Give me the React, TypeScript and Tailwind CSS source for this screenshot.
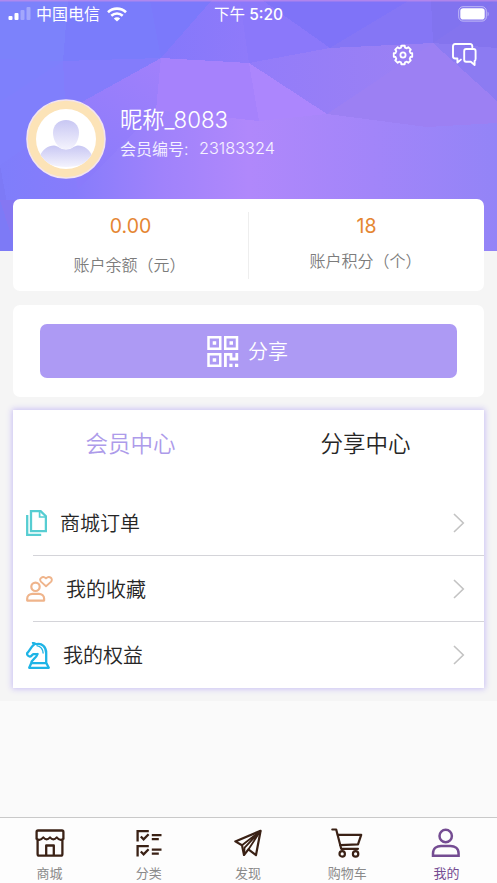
import type { ReactNode } from "react"

const FONT = "font-['Inter','Noto_Sans_CJK_SC',sans-serif]"

function PolyBackground() {
    return (
        <svg className="absolute inset-x-0 top-0 w-full h-[251px]" viewBox="0 0 497 251" preserveAspectRatio="none">
            <defs>
                <linearGradient id="base" x1="0" y1="0" x2="497" y2="0" gradientUnits="userSpaceOnUse">
                    <stop offset="0" stopColor="#7f7efb" />
                    <stop offset="0.15" stopColor="#877cfb" />
                    <stop offset="0.32" stopColor="#9f82fb" />
                    <stop offset="0.5" stopColor="#b088fb" />
                    <stop offset="0.75" stopColor="#a285f9" />
                    <stop offset="1" stopColor="#9384f7" />
                </linearGradient>
                <linearGradient id="mid" x1="165" y1="70" x2="90" y2="180" gradientUnits="userSpaceOnUse">
                    <stop offset="0" stopColor="#a080fb" />
                    <stop offset="1" stopColor="#8a7bfb" />
                </linearGradient>
                <linearGradient id="right" x1="250" y1="60" x2="400" y2="60" gradientUnits="userSpaceOnUse">
                    <stop offset="0" stopColor="#937cfa" />
                    <stop offset="1" stopColor="#9a80f4" />
                </linearGradient>
                <linearGradient id="wedge" x1="250" y1="60" x2="161" y2="58" gradientUnits="userSpaceOnUse">
                    <stop offset="0" stopColor="#8f7afa" />
                    <stop offset="1" stopColor="#8578fb" />
                </linearGradient>
            </defs>
            <rect width="497" height="251" fill="url(#base)" />
            <g shapeRendering="crispEdges">
                <path d="M0 0H68L63 61L0 59Z" fill="#7c82fb" />
                <path d="M68 0H150L161 58L63 61Z" fill="#7a7cfb" />
                <path d="M150 0H212L161 58Z" fill="#7b79fb" />
                <path d="M0 59L63 61L0 102Z" fill="#7e80fc" />
                <path d="M63 61L66 120L0 165V102Z" fill="#807ffc" />
                <path d="M63 61L161 58L82 102L66 120Z" fill="#837cfb" />
                <path d="M161 58L156 110L78 190L66 120L82 102Z" fill="url(#mid)" />
                <path d="M161 58L249 63L259 121L156 110Z" fill="#a682fc" />
                <path d="M212 0H240L249 63L161 58Z" fill="url(#wedge)" />
                <path d="M240 0H262L330 48L249 63Z" fill="#8b78fa" />
                <path d="M262 0H410L330 48Z" fill="#7f73f8" />
                <path d="M410 0H431L433 43L330 48Z" fill="#8576f5" />
                <path d="M431 0H497L433 43Z" fill="#8173ef" />
                <path d="M497 0V48L433 43Z" fill="#8474ee" />
                <path d="M249 63L330 48L433 43L327 114Z" fill="url(#right)" />
                <path d="M249 63L327 114L259 121Z" fill="#ac86fd" />
                <path d="M433 43L497 101V123L427 127L327 114Z" fill="#9c80f3" />
                <path d="M433 43L497 48V101Z" fill="#8c7bf2" />
                <path d="M0 165L16 251H0Z" fill="#7d7af6" />
                <path d="M0 200H40V251H16Z" fill="#8577f2" />
            </g>
            <path d="M0 0H497V1.5H0Z" fill="#c58ce8" opacity="0.7" />
        </svg>
    )
}

function StatusBar() {
    return (
        <div className="grid grid-cols-3 items-center h-[28px] text-white">
            <div className="flex items-center pl-[8px]">
                <svg width="23" height="14" viewBox="0 0 23 14" fill="currentColor">
                    <rect x="0.5" y="9" width="4" height="4" rx="1" />
                    <rect x="6.5" y="6" width="4" height="7" rx="1" />
                    <rect x="12.5" y="3" width="4" height="10" rx="1" opacity="0.3" />
                    <rect x="18.5" y="0" width="4" height="13" rx="1" opacity="0.3" />
                </svg>
                <span className="ml-[5px] text-[16px] leading-none whitespace-nowrap">中国电信</span>
                <svg className="ml-[7px]" width="20" height="15" viewBox="0 0 20 15" fill="none" stroke="currentColor" strokeWidth="2.6">
                    <path d="M1 5.2C6 0.4 14 0.4 19 5.2" />
                    <path d="M4.3 8.8C7.6 5.8 12.4 5.8 15.7 8.8" />
                    <path d="M10 14.6L6.8 11.4C8.5 9.8 11.5 9.8 13.2 11.4Z" fill="currentColor" stroke="none" />
                </svg>
            </div>
            <div className="pt-px text-center text-[15.5px] leading-none whitespace-nowrap">
                下午 <span className="font-medium">5:20</span>
            </div>
            <div className="flex justify-end pr-[8px]">
                <svg width="31" height="16" viewBox="0 0 31 16">
                    <rect x="0.7" y="0.7" width="27.6" height="14.4" rx="4.3" fill="none" stroke="#fff" strokeOpacity="0.5" />
                    <rect x="2.3" y="2.3" width="24.4" height="11.2" rx="2.8" fill="#fff" />
                    <path d="M29.6 5.4C31 6.2 31 9.6 29.6 10.4Z" fill="#fff" opacity="0.5" />
                </svg>
            </div>
        </div>
    )
}

function Avatar() {
    return (
        <svg width="80" height="80" viewBox="0 0 80 80" className="shrink-0">
            <defs>
                <linearGradient id="face" x1="0" y1="0" x2="0" y2="1">
                    <stop offset="0" stopColor="#c8c7f3" />
                    <stop offset="1" stopColor="#f4f3fd" />
                </linearGradient>
                <clipPath id="disc">
                    <circle cx="40" cy="40" r="30" />
                </clipPath>
            </defs>
            <circle cx="40" cy="40" r="39" fill="#fce3b7" stroke="#f3e4ee" strokeWidth="1.6" />
            <circle cx="40" cy="40" r="30" fill="#fff" />
            <g clipPath="url(#disc)">
                <path d="M13 58C17 50 22 46.5 28 46.5C32 46.5 34 50.5 40 50.5C46 50.5 48 46.5 52 46.5C58 46.5 63 50 67 58C62 64 52 68 40 68C28 68 18 64 13 58Z" fill="url(#face)" />
                <path d="M40 21C47.5 21 53 26 53 33.5C53 41 49.5 45.5 46.5 48.5C43.5 50.8 36.5 50.8 33.5 48.5C30.5 45.5 27 41 27 33.5C27 26 32.5 21 40 21Z" fill="url(#face)" />
            </g>
        </svg>
    )
}

// outline of an eight-toothed cog centred on (cx, cy)
function cogPoints(cx: number, cy: number, outer: number, inner: number) {
    const points: string[] = []
    for (let i = 0; i < 8; i++) {
        for (const [offset, r] of [[-15, inner], [-11, outer], [11, outer], [15, inner]]) {
            const a = ((i * 45 + offset) * Math.PI) / 180
            points.push(`${(cx + r * Math.cos(a)).toFixed(2)},${(cy + r * Math.sin(a)).toFixed(2)}`)
        }
    }
    return points.join(" ")
}

function GearIcon() {
    return (
        <svg width="22" height="22" viewBox="0 0 22 22" fill="none" stroke="#fff" strokeWidth="1.8" strokeLinejoin="round">
            <polygon points={cogPoints(11, 11, 9.4, 7.7)} />
            <circle cx="11" cy="11" r="2.6" />
        </svg>
    )
}

function ChatIcon() {
    return (
        <svg width="25" height="24" viewBox="0 0 25 24" fill="none" stroke="#fff" strokeWidth="1.9" strokeLinejoin="round" strokeLinecap="round">
            <path d="M20.3 4.2V3.2Q20.3 1 18.1 1H3.2Q1 1 1 3.2V13.3Q1 15.5 3.2 15.5H5.4V19.6L8.9 16.6" />
            <path d="M14.2 6H21.6Q23.6 6 23.6 8V15.8Q23.6 17.8 22.6 18V22L18.8 18.8H14.2Q12.2 18.8 12.2 16.8V8Q12.2 6 14.2 6Z" />
        </svg>
    )
}

function QrIcon() {
    return (
        <svg width="32" height="31" viewBox="0 0 32 31" fill="none" stroke="#fff" strokeWidth="2.5">
            <path d="M1.5 1.25H13.25V12.75H1.5ZM18.25 1.25H30V12.75H18.25ZM1.5 18.25H13.25V29.75H1.5Z" />
            <path d="M5.7 5.3H9.2V8.8H5.7ZM22.5 5.3H26V8.8H22.5ZM5.7 22.3H9.2V25.8H5.7Z" fill="#fff" stroke="none" />
            <path d="M18.4 31V18.3H24V23H29.8V17" strokeWidth="2.8" />
            <path d="M22.3 27.8H25.5V31H22.3ZM28 27.8H31.2V31H28Z" fill="#fff" stroke="none" />
        </svg>
    )
}

function OrdersIcon() {
    return (
        <svg width="21" height="26" viewBox="0 0 21 26" fill="none" stroke="#56cdd2" strokeWidth="2.3">
            <path d="M5 1.1H14.6L19.9 6.3V21.2H5Z" />
            <path d="M13.6 1.5V7H19.4" strokeWidth="1.7" />
            <path d="M1.2 5V24.8H15.2" />
        </svg>
    )
}

function FavoriteIcon() {
    return (
        <svg width="27" height="26" viewBox="0 0 27 26" fill="none" stroke="#efb48b" strokeWidth="2.2" strokeLinejoin="round">
            <circle cx="9.5" cy="10.8" r="4.2" />
            <path d="M1.2 24.6V22.5C1.2 19.6 3.8 17.8 6.4 17.8H12.9C15.6 17.8 18.1 19.6 18.1 22.5V24.6Z" />
            <path d="M20 10.2L14.9 5.6C12.7 2.6 16.6 -0.9 20 2.4C23.4 -0.9 27.4 2.6 25.2 5.6Z" strokeWidth="1.9" />
        </svg>
    )
}

function RightsIcon() {
    return (
        <svg width="24" height="27" viewBox="0 0 24 27" fill="none" stroke="#1eb4e6" strokeWidth="2.3" strokeLinejoin="round">
            <path d="M8 2.7L7 0.8L10.6 2.2C16 1 20.2 5 20.2 11V21.2H5.2C5.3 17.6 10.2 16.6 11.6 12C9.8 12.6 8.6 11.8 7.5 12.1C6 12.6 5.2 14.8 3.6 14.5C2.2 14.2 0.8 12.6 1 11.3C3.6 8.8 4.8 5.2 8 2.7Z" />
            <path d="M10.6 3.6C14.8 4.4 17 7.2 17.2 11.5" strokeWidth="1.4" />
            <path d="M5.2 21.2L3.2 25.8H22.8L20.4 21.2" />
        </svg>
    )
}

function ChevronIcon() {
    return (
        <svg width="12" height="20" viewBox="0 0 12 20" fill="none" stroke="#c3c3c3" strokeWidth="1.6">
            <path d="M1 1L10.3 10L1 19" />
        </svg>
    )
}

function ShopIcon() {
    return (
        <svg width="30" height="28" viewBox="0 0 30 28" fill="none" stroke="#3a2115" strokeWidth="2.3" strokeLinejoin="round">
            <path d="M28.4 10.5V3Q28.4 1.5 27 1.5H3Q1.6 1.5 1.6 3V10.5" />
            <path d="M1.6 9.8Q5 12.4 8.3 8.4Q11.6 12.4 15 8.4Q18.4 12.4 21.7 8.4Q25 12.4 28.4 9.8" strokeWidth="2.1" />
            <path d="M2.6 10.5V25Q2.6 26.7 4.2 26.7H25.8Q27.4 26.7 27.4 25V10.5" />
            <path d="M11.2 26V16.5H18.8V26" />
        </svg>
    )
}

function CategoryIcon() {
    return (
        <svg width="26" height="28" viewBox="0 0 26 28" fill="none" stroke="#3a2115" strokeWidth="2.3">
            <path d="M1.6 12.5V2.1H12.8M1.6 27.5V17.1H12.8" />
            <path d="M4.8 7.5L7.6 10.3L12.6 5.2M4.8 22.5L7.6 25.3L12.6 20.2" />
            <path d="M15.8 6.1H25.5M15.8 10.1H22.8M15.8 20.6H25.5M15.8 24.6H22.8" strokeWidth="2.1" />
        </svg>
    )
}

function DiscoverIcon() {
    return (
        <svg width="28" height="28" viewBox="0 0 28 28" fill="none" stroke="#3a2115" strokeWidth="2.2" strokeLinejoin="round">
            <path d="M26.6 1.8L1.3 12.4L8 16.3L10 26L14.4 20.4L22 26Z" />
            <path d="M26.6 1.8L8 16.3M26.6 1.8L10.6 18.6L10 26M26.6 1.8L14.4 20.4" strokeWidth="1.8" />
        </svg>
    )
}

function CartIcon() {
    return (
        <svg width="32" height="30" viewBox="0 0 32 30" fill="none" stroke="#3a2115" strokeWidth="2.2" strokeLinejoin="round" strokeLinecap="round">
            <path d="M1.3 1.5H5.2L10.2 20.8H27" />
            <path d="M6.8 6.8H30.2L27 16.3L9.3 17.2" />
            <circle cx="11.2" cy="25.9" r="2.7" />
            <circle cx="24.6" cy="25.9" r="2.7" />
        </svg>
    )
}

function MineIcon() {
    return (
        <svg width="30" height="30" viewBox="0 0 30 30" fill="none" stroke="#744c92" strokeWidth="2.5">
            <circle cx="14.7" cy="8" r="6.2" />
            <path d="M2 27.7V25.5C2 20.4 6 18 10 18H19.4C23.6 18 27.6 20.4 27.6 25.5V27.7Z" />
        </svg>
    )
}

const MENU: { label: string; icon: ReactNode; gap: string }[] = [
    { label: "商城订单", icon: <OrdersIcon />, gap: "gap-[13px]" },
    { label: "我的收藏", icon: <FavoriteIcon />, gap: "gap-[13px]" },
    { label: "我的权益", icon: <RightsIcon />, gap: "gap-[13px]" },
]

const TABS: { label: string; icon: ReactNode }[] = [
    { label: "商城", icon: <ShopIcon /> },
    { label: "分类", icon: <CategoryIcon /> },
    { label: "发现", icon: <DiscoverIcon /> },
    { label: "购物车", icon: <CartIcon /> },
    { label: "我的", icon: <MineIcon /> },
]

export default function App() {
    return (
        <div className={`relative flex flex-col w-full h-[883px] overflow-hidden bg-[#fafafa] ${FONT}`}>
            <div className="h-[701px] shrink-0 bg-[#f5f5f5]">
                <PolyBackground />

                <div className="relative">
                    <StatusBar />

                    <div className="flex justify-end items-center gap-[38px] h-[54px] pr-[20px]">
                        <GearIcon />
                        <ChatIcon />
                    </div>

                    {/* Profile */}
                    <div className="flex items-start gap-[13px] h-[100px] pl-[26px] pt-[17px] mb-[17px] text-white">
                        <Avatar />
                        <div className="pt-[7px] pl-px">
                            <div className="text-[22.3px] leading-[28px] font-[350]">昵称_8083</div>
                            <div className="flex mt-[1px] text-[16px] leading-[28px] font-[350] text-white/90">
                                <span className="w-[79px] whitespace-nowrap">会员编号:</span>
                                <span className="text-[16.3px] leading-[27px]">23183324</span>
                            </div>
                        </div>
                    </div>

                    {/* Balance and points */}
                    <div className="flex mx-[13px] h-[92px] bg-white rounded-[7px] text-center">
                        <div className="w-1/2 pt-[14px]">
                            <div className="text-[19.5px] leading-[26px] text-[#e58632]">0.00</div>
                            <div className="-ml-[2px] mt-[14px] text-[16px] leading-[24px] font-[350] text-[#7c7c7c]">账户余额（元）</div>
                        </div>
                        <div className="w-px h-[67px] mt-[13px] bg-[#eee]" />
                        <div className="w-1/2 pt-[14px]">
                            <div className="text-[19.5px] leading-[26px] text-[#e58632]">18</div>
                            <div className="-ml-[2px] mt-[10px] text-[16px] leading-[24px] font-[350] text-[#7c7c7c]">账户积分（个）</div>
                        </div>
                    </div>

                    <div className="mx-[13px] mt-[14px] h-[92px] px-[27px] pt-[19px] bg-white rounded-[7px]">
                        <button className="flex items-center justify-center gap-[9px] w-full h-[54px] pr-[2px] rounded-[7px] bg-[#ad9af4] text-white text-[20px] font-[350]">
                            <QrIcon />
                            <span className="pt-px">分享</span>
                        </button>
                    </div>

                    {/* Member panel */}
                    <div className="mx-[13px] mt-[13px] bg-white shadow-[0_0_6px_1px_#c9bff5]">
                        <div className="flex h-[80px] pr-[1px] pt-[16px] text-[22.5px] leading-[36px] text-center font-[350]">
                            <div className="w-1/2 text-[#ad9bea]">会员中心</div>
                            <div className="w-1/2 text-[#262626]">分享中心</div>
                        </div>
                        {MENU.map((item, i) => (
                            <div key={item.label}>
                                <div className={`flex items-center pl-[13px] pr-[19px] ${i < 2 ? "h-[65px]" : "h-[66px]"}`}>
                                    <div className={`flex items-center flex-1 text-[20px] text-[#262626] ${item.gap}`}>
                                        {item.icon}
                                        <span className="pt-[2px] leading-[30px] font-[350]">{item.label}</span>
                                    </div>
                                    <ChevronIcon />
                                </div>
                                {i < 2 && <div className="ml-[20px] h-px bg-[#d4d4d9]" />}
                            </div>
                        ))}
                    </div>
                </div>
            </div>

            <nav className="flex mt-auto h-[66px] pr-[1px] shrink-0 bg-[#fdfdfd] border-t border-[#c9c9c9]">
                {TABS.map((tab) => (
                    <div
                        key={tab.label}
                        className={`flex flex-col items-center flex-1 pt-[9px] text-[13px] ${tab.label === "我的" ? "text-[#744c92]" : "text-[#8a8a8a]"}`}
                    >
                        <div className="flex items-center justify-center h-[31px]">{tab.icon}</div>
                        <span className="mt-[5px] leading-[20px]">{tab.label}</span>
                    </div>
                ))}
            </nav>
        </div>
    )
}
